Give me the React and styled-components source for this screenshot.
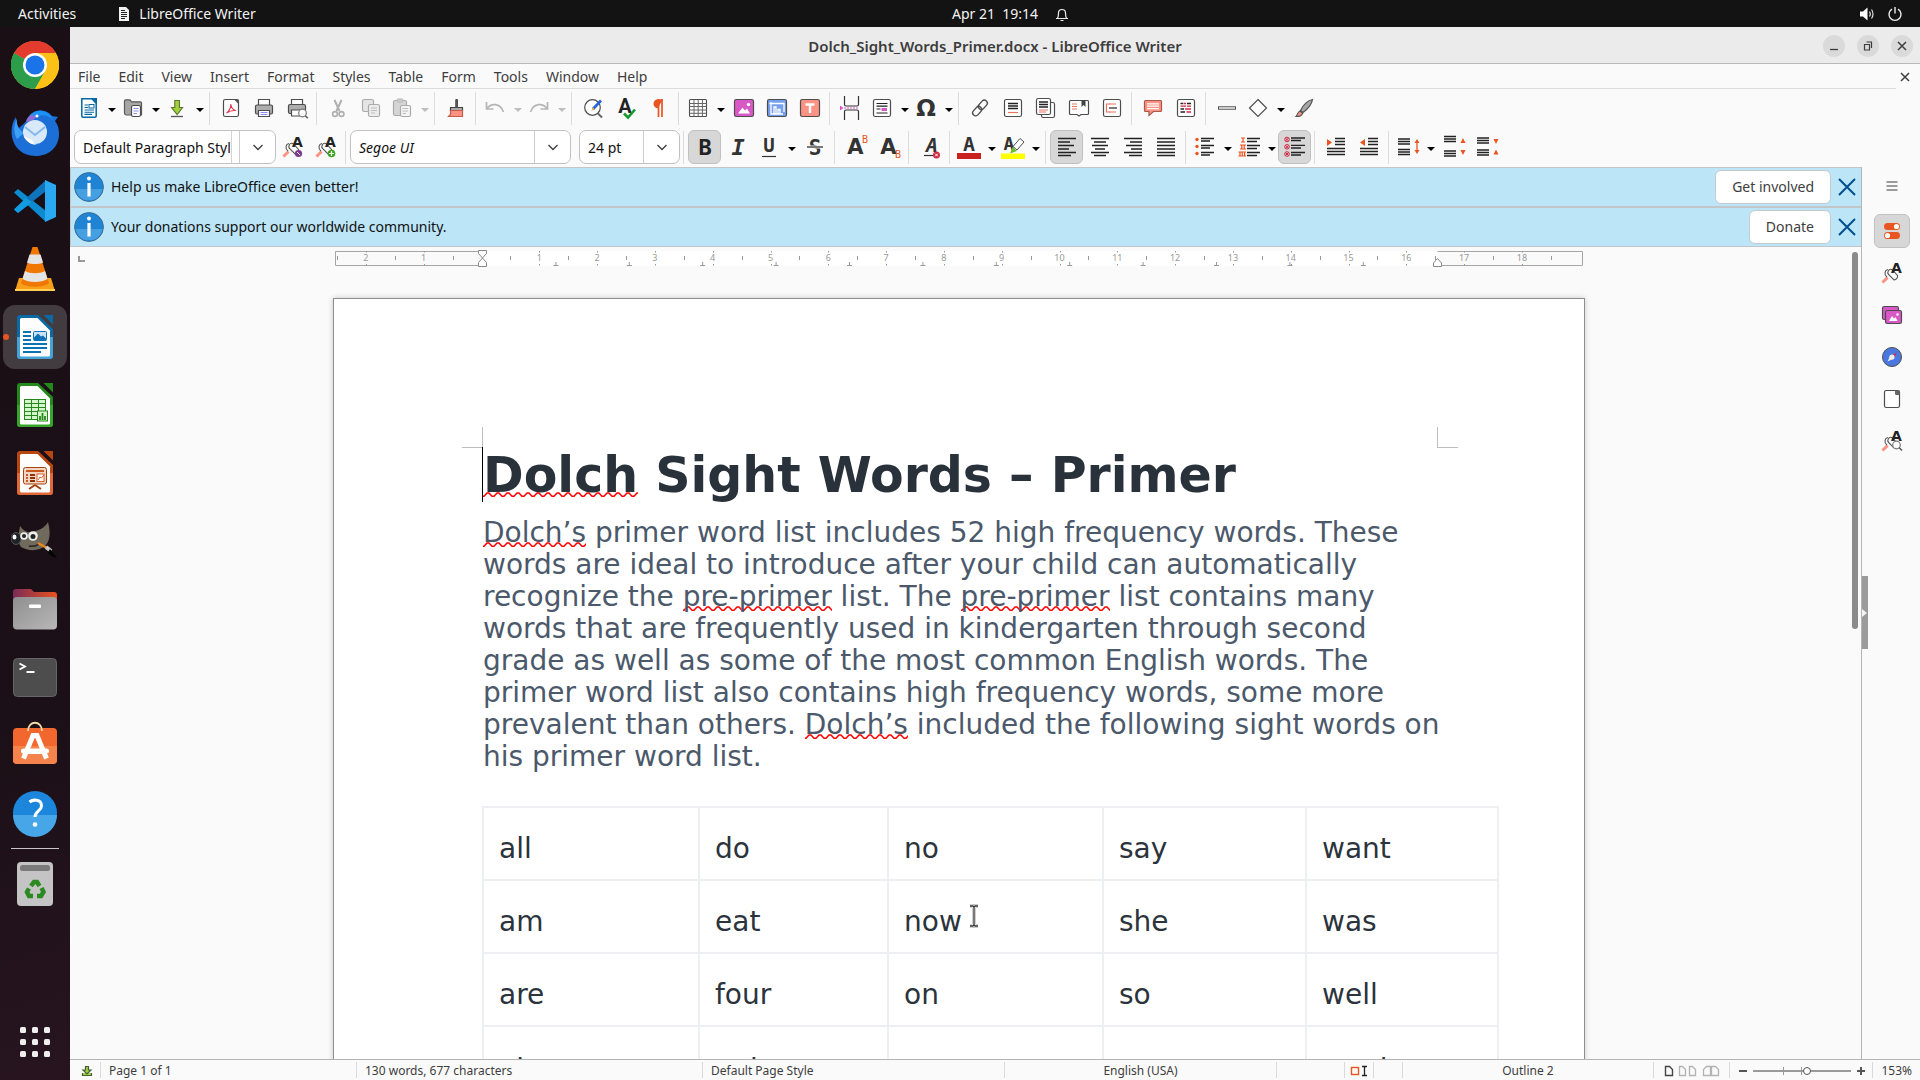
import React from "react";
import styled, { createGlobalStyle, css } from "styled-components";

const ui = `"Noto Sans", "Open Sans", sans-serif`;
const docFont = `"DejaVu Sans", sans-serif`;
const ink = "#3d3d3d";
const line = "#4d4d4d";
const orange = "#e95420";

const GlobalStyle = createGlobalStyle`
  *, *::before, *::after { box-sizing: border-box; }
  html, body { margin: 0; height: 100%; }
  body { font-family: ${ui}; font-size: 14px; line-height: 20px; color: ${ink}; background: #fafafa; overflow: hidden; }
  button { font: inherit; color: inherit; padding: 0; margin: 0; border: 0; background: none; cursor: default; }
  svg { display: block; flex: none; }
`;

/* ---------- shell ---------- */
const Desktop = styled.div`
  height: 100vh;
  display: flex;
  flex-direction: column;
`;
const TopBar = styled.header`
  flex: none;
  height: 27px;
  background: #131313;
  color: #f2f2f2;
  display: grid;
  grid-template-columns: 1fr auto 1fr;
  align-items: center;
`;
const TopGroup = styled.div`
  display: flex;
  align-items: center;
  gap: ${(p) => p.$gap || 8}px;
  justify-content: ${(p) => (p.$end ? "flex-end" : "flex-start")};
  padding: 0 ${(p) => (p.$end ? 17 : 18)}px;
`;
const TopButton = styled.button`
  display: flex;
  align-items: center;
  gap: 8px;
`;
const ClockGroup = styled(TopGroup)`
  padding: 0 0 0 102px;
`;
const Body = styled.div`
  flex: 1;
  min-height: 0;
  display: flex;
`;
const Dock = styled.nav`
  flex: none;
  width: 70px;
  padding: 4px 0;
  background: linear-gradient(165deg, #1a0f15 0%, #1b1017 65%, #27141f 100%);
  display: flex;
  flex-direction: column;
`;
const DockButton = styled.button`
  position: relative;
  height: 68px;
  display: flex;
  align-items: center;
  justify-content: center;
`;
const DockTile = styled.span`
  width: 64px;
  height: 64px;
  border-radius: 12px;
  display: flex;
  align-items: center;
  justify-content: center;
  background: ${(p) => (p.$active ? "#423b40" : "transparent")};
`;
const RunningDot = styled.span`
  position: absolute;
  left: 3px;
  top: 31px;
  width: 6px;
  height: 6px;
  border-radius: 50%;
  background: ${orange};
`;
const DockRule = styled.hr`
  width: 48px;
  height: 1px;
  margin: 1px auto;
  border: 0;
  background: #c9c6c8;
`;
const Spacer = styled.div`
  flex: 1;
`;
const Window = styled.main`
  flex: 1;
  min-width: 0;
  display: flex;
  flex-direction: column;
  background: #fafafa;
`;

/* ---------- title, menus ---------- */
const TitleBar = styled.div`
  flex: none;
  height: 37px;
  padding-top: 1px;
  background: #ebebeb;
  border-bottom: 1px solid #b9b9b9;
  display: grid;
  grid-template-columns: 1fr auto 1fr;
  align-items: center;
`;
const Title = styled.h1`
  grid-column: 2;
  margin: 0;
  font-size: 15px;
  line-height: 20px;
  font-weight: 600;
`;
const WindowButtons = styled.div`
  display: flex;
  justify-content: flex-end;
  gap: 12px;
  padding-right: 7px;
`;
const RoundButton = styled.button`
  width: 22px;
  height: 22px;
  border-radius: 50%;
  background: #dadada;
  display: flex;
  align-items: center;
  justify-content: center;
`;
const MenuBar = styled.div`
  flex: none;
  height: 25px;
  display: flex;
`;
const Menus = styled.nav`
  flex: 1;
  display: flex;
  align-items: center;
  gap: 18px;
  padding: 2px 0 0 8px;
  border-bottom: 1px solid #dcdcdc;
`;
const CloseDoc = styled.button`
  width: 24px;
  padding-left: 2px;
`;

/* ---------- toolbars ---------- */
const Toolbar = styled.div`
  flex: none;
  display: flex;
  align-items: center;
  height: ${(p) => p.$height}px;
  padding-left: 4px;
`;
const ToolButton = styled.button`
  flex: none;
  width: 33px;
  height: 34px;
  display: flex;
  align-items: center;
  justify-content: center;
  ${(p) =>
    p.$on &&
    css`
      background: #d7d7d7;
      border: 1px solid #c1c1c1;
      border-radius: 6px;
    `}
  ${(p) => p.disabled && css`opacity: 0.45;`}
`;
const SplitTool = styled.div`
  flex: none;
  width: 44px;
  height: 34px;
  display: flex;
  align-items: center;
  ${(p) => p.$off && css`opacity: 0.45;`}
`;
const SplitMain = styled.button`
  width: 30px;
  display: flex;
  justify-content: center;
`;
const SplitArrow = styled.button`
  width: 14px;
  height: 24px;
  display: flex;
  align-items: center;
  justify-content: flex-end;
  &::before {
    content: "";
    border: solid transparent;
    border-width: 4px 4px 0;
    border-top-color: ${(p) => (p.$off ? "#777" : "#000")};
    margin-right: 2px;
    margin-top: 3px;
  }
`;
const ToolSeparator = styled.span`
  flex: none;
  width: 1px;
  height: 33px;
  margin: 0 4px 0 3px;
  background: #dcdcdc;
`;
const Combo = styled.div`
  flex: none;
  width: ${(p) => p.$width}px;
  height: 34px;
  margin-right: ${(p) => p.$after || 0}px;
  display: flex;
  border: 1px solid #c1c1c1;
  border-radius: 7px;
  background: #fff;
  overflow: hidden;
`;
const ComboInput = styled.input`
  flex: 1;
  min-width: 0;
  border: 0;
  border-right: ${(p) => (p.$clip ? "1px solid #d5d5d5" : "0")};
  margin-right: ${(p) => (p.$clip ? 7 : 0)}px;
  outline: 0;
  padding: 0 0 0 8px;
  background: transparent;
  font-family: ${ui};
  font-size: 14px;
  font-style: ${(p) => (p.$italic ? "italic" : "normal")};
  color: #111;
`;
const ComboArrow = styled.button`
  width: 36px;
  border-left: 1px solid #cdcdcd;
  display: flex;
  align-items: center;
  justify-content: center;
`;

/* ---------- workspace ---------- */
const Work = styled.div`
  flex: 1;
  min-height: 0;
  display: flex;
`;
const Editor = styled.section`
  flex: 1;
  min-width: 0;
  display: flex;
  flex-direction: column;
`;
const InfoBar = styled.div`
  flex: none;
  height: 40px;
  display: flex;
  align-items: center;
  gap: 7px;
  padding: 0 5px 0 3px;
  background: #bce5f7;
  border: 1px solid #c3c6c8;
  border-right: 0;
  color: #111;
`;
const InfoText = styled.p`
  margin: 0;
  flex: 1;
`;
const InfoAction = styled.button`
  height: 34px;
  padding: 0 16px;
  background: #fff;
  border: 1px solid #c6cacc;
  border-radius: 6px;
  color: ${ink};
`;
const Scroller = styled.div`
  flex: 1;
  min-height: 0;
  display: flex;
`;
const Canvas = styled.div`
  flex: 1;
  min-width: 0;
  display: flex;
  flex-direction: column;
  overflow: hidden;
`;
const RulerRow = styled.div`
  flex: none;
  height: 24px;
  padding-top: 3px;
  display: grid;
  grid-template-columns: 1fr auto 1fr;
`;
const TabMark = styled.span`
  width: 7px;
  height: 6px;
  margin: 6px 0 0 8px;
  border: solid #999;
  border-width: 0 0 2px 2px;
`;
const PageArea = styled.div`
  flex: 1;
  min-height: 0;
  overflow: hidden;
  padding-top: 27px;
  display: flex;
  justify-content: center;
  align-items: flex-start;
`;
const Page = styled.article`
  position: relative;
  flex: none;
  width: 1252px;
  padding: 148px 147px 148px 149px;
  background: #fff;
  border: 1px solid #8e8e8e;
  box-shadow: 0 0 6px rgba(0, 0, 0, 0.2);
  font-family: ${docFont};
`;
const Corner = styled.span`
  position: absolute;
  top: 128px;
  width: 21px;
  height: 21px;
  border-bottom: 1px solid #bdbdbd;
  ${(p) =>
    p.$right
      ? css`right: 126px; border-left: 1px solid #bdbdbd;`
      : css`left: 128px; border-right: 1px solid #bdbdbd;`}
`;
const Caret = styled.span`
  position: absolute;
  left: 148px;
  top: 148px;
  width: 1px;
  height: 55px;
  background: #000;
`;
const Pointer = styled.svg`
  position: absolute;
  left: 634px;
  top: 604px;
`;
const Heading = styled.h2`
  margin: 0;
  font-size: 49px;
  line-height: 57px;
  font-weight: 700;
  color: #29313a;
  white-space: nowrap;
`;
const Paragraph = styled.p`
  margin: 13px 0 33px;
  font-size: 28px;
  line-height: 32px;
  color: #4b596b;
  white-space: nowrap;
`;
const squiggle = encodeURIComponent(
  `<svg xmlns='http://www.w3.org/2000/svg' width='10' height='5' viewBox='0 0 10 5'><path d='M-1 4.2H1L4 .9H6L9 4.2H11' fill='none' stroke='#f00' stroke-width='1.5' stroke-linejoin='round'/></svg>`
);
const Misspelt = styled.span`
  padding-bottom: ${(p) => (p.$big ? 0 : 1)}px;
  background: url("data:image/svg+xml,${squiggle}") repeat-x left bottom ${(p) => (p.$big ? 7 : 3)}px;
`;
const WordTable = styled.table`
  border-collapse: collapse;
  table-layout: fixed;
  width: 1015px;
  margin-left: -1px;
  font-size: 28px;
  line-height: 32px;
  color: #2b333c;
`;
const WordCell = styled.td`
  height: 73px;
  padding: 25px 15px 14px;
  border: 2px solid #eeeff2;
  text-align: left;
`;
const ScrollTrack = styled.div`
  flex: none;
  width: 13px;
  padding: 5px 3px 5px 4px;
`;
const ScrollThumb = styled.div`
  height: 47%;
  border-radius: 3px;
  background: #8b8b8b;
`;
const SideBar = styled.aside`
  position: relative;
  flex: none;
  width: 59px;
  border-left: 1px solid #b4b4b4;
  padding-top: 2px;
  display: flex;
  flex-direction: column;
  align-items: center;
  gap: 8px;
`;
const SideButton = styled.button`
  width: 36px;
  height: 34px;
  margin-left: 1px;
  border-radius: 6px;
  display: flex;
  align-items: center;
  justify-content: center;
  ${(p) => p.$first && css`margin-bottom: 3px;`}
  ${(p) => p.$on && css`background: #d7d7d7; border: 1px solid #c1c1c1;`}
`;
const SideHandle = styled.button`
  position: absolute;
  left: 0;
  top: 409px;
  width: 6px;
  height: 73px;
  background: #9b9b9b;
  display: flex;
  align-items: center;
  &::before {
    content: "";
    border: solid transparent;
    border-width: 4px 0 4px 5px;
    border-left-color: #f4f4f4;
  }
`;

/* ---------- status bar ---------- */
const StatusBar = styled.footer`
  flex: none;
  height: 21px;
  border-top: 1px solid #b4b4b4;
  display: grid;
  grid-template-columns: 30px 256fr 346fr 302fr 272fr 68px 29px 29px 251fr 76px 143px 48px;
  font-size: 12px;
  line-height: 18px;
`;
const StatusCell = styled.div`
  position: relative;
  display: flex;
  align-items: center;
  gap: ${(p) => p.$gap || 0}px;
  justify-content: ${(p) => (p.$center ? "center" : p.$end ? "flex-end" : "flex-start")};
  padding: 1px ${(p) => (p.$center ? 0 : 8)}px 0;
  white-space: nowrap;
  border-left: ${(p) => (p.$first ? "4px solid transparent" : "1px solid transparent")};
  border-image: ${(p) =>
    p.$first ? "none" : "linear-gradient(transparent 3px, #dadada 3px, #dadada 17px, transparent 17px) 1"};
`;
const ZoomSlider = styled.input`
  appearance: none;
  width: 98px;
  height: 14px;
  margin: 0;
  background:
    linear-gradient(#9a9a9a, #9a9a9a) 0 center / 98px 2px no-repeat,
    linear-gradient(#9a9a9a, #9a9a9a) 30px center / 1px 8px no-repeat,
    linear-gradient(#9a9a9a, #9a9a9a) 48px center / 1px 8px no-repeat;
  &::-webkit-slider-thumb {
    appearance: none;
    width: 8px;
    height: 8px;
    border-radius: 50%;
    border: 1px solid #555;
    background: #fff;
  }
`;
const ZoomStep = styled.button`
  width: 10px;
  height: 14px;
  display: flex;
  align-items: center;
  justify-content: center;
`;

/* ---------- icons ---------- */
const Icon = ({ size = 24, children, ...rest }) => (
  <svg width={size} height={size} viewBox={`0 0 ${size} ${size}`} fill="none" aria-hidden="true" {...rest}>
    {children}
  </svg>
);
const Glyph = ({ x = 12, y = 19, size = 20, fill = "#333", family = "DejaVu Sans Mono", weight = 700, style, children }) => (
  <text x={x} y={y} fontSize={size} fill={fill} fontFamily={family} fontWeight={weight} fontStyle={style} textAnchor="middle">
    {children}
  </text>
);
const Lines = ({ rows, color = "#222", w = 1.5 }) => (
  <path d={rows.map(([x1, x2, y]) => `M${x1} ${y}H${x2}`).join("")} stroke={color} strokeWidth={w} />
);
const Paper = ({ x = 4.5, y = 3.5, w = 15, h = 17, fill = "#fff" }) => (
  <rect x={x} y={y} width={w} height={h} rx="1.8" fill={fill} stroke={line} strokeWidth="1.2" />
);
const Brush = () => (
  <>
    <path d="M3.500 20.500L6.500 17.500" stroke="#fc9283" strokeWidth="3" strokeLinecap="square" />
    <path d="M7 16c-3.500-3-2-7 1-7.500M8.500 9.500c1-1.500 3-1.500 4-.5l5 5.500c.5 2-1 4-3.500 4.500l-5.500-5.500c-.8-1.200-.8-2.800 0-4Z" fill="#fafafa" stroke="#555" strokeWidth="1.100" />
  </>
);

const icons = {
  newdoc: (
    <Icon>
      <path d="M4.800 2.800H15L19.200 7V20a1.200 1.200 0 0 1-1.200 1.200H6A1.200 1.200 0 0 1 4.800 20Z" fill="#fff" stroke="#0369a3" strokeWidth="1.500" />
      <path d="M13.500 2H20V9Z" fill="#0369a3" />
      <Lines color="#0369a3" rows={[[7.500, 11, 9], [7.500, 11, 11.500], [7.500, 17, 14], [7.500, 17, 16.200], [7.500, 15, 18.400]]} w={1.100} />
      <rect x="12" y="8.500" width="5" height="3.500" stroke="#0369a3" />
    </Icon>
  ),
  open: (
    <Icon>
      <path d="M3.500 5a1.200 1.200 0 0 1 1.200-1.200H9l1.500 2h8.800A1.200 1.200 0 0 1 20.500 7v12H5.500a2 2 0 0 1-2-2Z" fill="#a6a6a6" stroke="#5a5a5a" strokeWidth="1.200" />
      <Paper x={10.500} y={9.500} w={9} h={11} />
      <Lines color="#8d8cf0" rows={[[12.500, 17.500, 12.500], [12.500, 17.500, 15], [12.500, 16, 17.500]]} w={1.200} />
    </Icon>
  ),
  save: (
    <Icon>
      <path d="M9.800 4.500h4.600v7h3.200L12.100 18.500 6.600 11.500h3.200Z" fill="#a3d040" stroke="#59762a" strokeWidth="1.100" />
      <path d="M6 20.500h12" stroke="#555" strokeWidth="1.300" />
    </Icon>
  ),
  pdf: (
    <Icon>
      <Paper /><path d="M15 3.500h4.500V8Z" fill="#555" />
      <path d="M7.500 17c2-1 4.500-5 4.300-9 .5 4 2.500 6 5 6.500-3-.3-6 .3-9.300 2.500Z" stroke="#e2354f" strokeWidth="1.100" />
    </Icon>
  ),
  print: (
    <Icon>
      <path d="M6.500 9V3.500h11V9" fill="#fff" stroke={line} strokeWidth="1.200" />
      <rect x="3.500" y="9" width="17" height="9" rx="1.500" fill="#adadad" stroke={line} strokeWidth="1.200" />
      <path d="M6.500 14.500h11v6h-11Z" fill="#fff" stroke={line} strokeWidth="1.200" />
      <Lines color="#8d8cf0" rows={[[8.500, 15.500, 16.500], [8.500, 15.500, 18.500]]} w={1.100} />
    </Icon>
  ),
  preview: (
    <Icon>
      <path d="M6.500 8.500V3.500h11v5" fill="#fff" stroke={line} strokeWidth="1.200" />
      <rect x="3.500" y="8.500" width="17" height="9" rx="1.500" fill="#adadad" stroke={line} strokeWidth="1.200" />
      <path d="M6.500 14h9v6h-9Z" fill="#fff" stroke={line} strokeWidth="1.200" />
      <circle cx="17.500" cy="17" r="3.800" fill="#fff" stroke="#777" strokeWidth="1.200" />
      <path d="M20.300 19.800l2.500 2.500" stroke="#555" strokeWidth="1.500" />
    </Icon>
  ),
  cut: (
    <Icon>
      <path d="M8.500 4l5 11M15.500 4l-5 11" stroke="#555" strokeWidth="2" />
      <circle cx="9" cy="18" r="2.400" stroke="#555" strokeWidth="1.600" /><circle cx="15.500" cy="18" r="2.400" stroke="#555" strokeWidth="1.600" />
    </Icon>
  ),
  copy: (
    <Icon>
      <Paper x={3.500} y={3.500} w={11} h={12} fill="#ccc" /><Paper x={9.500} y={8.500} w={11} h={12} fill="#ddd" />
      <Lines color="#777" rows={[[12, 18, 12], [12, 18, 14.500], [12, 16, 17]]} w={1.200} />
    </Icon>
  ),
  paste: (
    <Icon>
      <Paper x={3.500} y={4.500} w={13} h={15} fill="#aaa" /><rect x="7" y="3" width="6" height="3" rx="1" fill="#999" stroke="#666" />
      <Paper x={10.500} y={9.500} w={10} h={11} fill="#eee" />
      <Lines color="#777" rows={[[12.500, 18, 12.500], [12.500, 18, 15], [12.500, 16, 17.500]]} w={1.200} />
    </Icon>
  ),
  clone: (
    <Icon>
      <path d="M11.800 3.500h1.600v8h-1.600Z" fill="#666" stroke="#444" /><path d="M6.500 11.500h12v3h-12Z" fill="#aaa" stroke="#444" strokeWidth="1.200" />
      <path d="M6.500 14.500h12v6h-14l2-2Z" fill="#fc9283" stroke="#c45a48" strokeWidth="1.200" />
    </Icon>
  ),
  undo: (<Icon><path d="M3.500 6v7h7M4 12.500c4-5.500 13-6 16.500 3.500" stroke="#666" strokeWidth="1.700" /></Icon>),
  redo: (<Icon><path d="M20.500 6v7h-7M20 12.500c-4-5.500-13-6-16.500 3.500" stroke="#666" strokeWidth="1.700" /></Icon>),
  find: (
    <Icon>
      <circle cx="11.500" cy="11.500" r="7.800" fill="#fff" stroke={line} strokeWidth="1.200" />
      <path d="M17 17.500l4 4" stroke="#666" strokeWidth="2" />
      <path d="M20 4.500l-8 8.500" stroke="#2b63d9" strokeWidth="2.800" /><path d="M12.500 11.500l-2.500 3.500 3.500-1.700Z" fill="#f5a623" />
    </Icon>
  ),
  spell: (
    <Icon>
      <Glyph x={11} y={17} size={20} family="Roboto" fill="#222">A</Glyph>
      <path d="M10 17.500l4 4 7-8" stroke="#189a2e" strokeWidth="2.600" />
    </Icon>
  ),
  pilcrow: (
    <Icon>
      <path d="M11.500 3v18M15 3v18" stroke={orange} strokeWidth="1.700" /><path d="M15.500 3.200H11a4.500 4.500 0 0 0 0 9Z" fill={orange} />
    </Icon>
  ),
  table: (
    <Icon>
      <rect x="3.500" y="3.500" width="17" height="17" rx="1" fill="#fff" stroke={line} strokeWidth="1.100" />
      <path d="M3.500 7.500h17M3.500 10.500h17M3.500 14h17M3.500 17.300h17M8 3.500v17M12.200 3.500v17M16.400 3.500v17" stroke="#666" strokeWidth="1" />
    </Icon>
  ),
  image: (
    <Icon>
      <Paper x={2.500} y={3.500} w={19} h={17} fill="#d858c8" />
      <path d="M6 17.500l4.500-6 2.500 3 2-2 3 5Z" fill="#fff" /><circle cx="16.500" cy="8.500" r="1.700" fill="#fff" />
    </Icon>
  ),
  chart: (
    <Icon>
      <Paper x={2.500} y={3.500} w={19} h={17} fill="#779ff0" />
      <path d="M6 6v12h12M4.500 7.500H19V16M9 17.500V11h2v6.500M13 17.500v-4h2v4" stroke="#fff" strokeWidth="1.300" />
    </Icon>
  ),
  textbox: (
    <Icon>
      <Paper x={2.500} y={3.500} w={19} h={17} fill="#fc9283" /><path d="M7.500 8.500h9M12 8.500V17" stroke="#fff" strokeWidth="2.400" />
    </Icon>
  ),
  pagebreak: (
    <Icon>
      <path d="M5.500 0v8.500a1.500 1.500 0 0 0 1.500 1.500h11a1.500 1.500 0 0 0 1.500-1.500V0M5.500 24v-8.500a1.500 1.500 0 0 1 1.500-1.500h11a1.500 1.500 0 0 1 1.500 1.500V24" stroke="#333" strokeWidth="1.200" />
      <path d="M5 12h15" stroke="#d858c8" strokeDasharray="2 1" /><path d="M1 9.500v5l3.500-2.500Z" fill="#d858c8" />
    </Icon>
  ),
  field: (
    <Icon>
      <Paper x={3.500} w={17} /><Lines rows={[[6.500, 17.500, 7.500], [6.500, 17.500, 10.200], [6.500, 10.500, 13], [6.500, 17.500, 17]]} w={1.200} />
      <rect x="11.500" y="12" width="5.500" height="3" fill="#d858c8" />
    </Icon>
  ),
  omega: (<Icon><Glyph y={20} size={23} family="DejaVu Sans">Ω</Glyph></Icon>),
  link: (
    <Icon>
      <g stroke={line} strokeWidth="1.300" transform="rotate(-48 12 12)">
        <rect x="2.500" y="9" width="10.500" height="6" rx="3" /><rect x="11" y="9" width="10.500" height="6" rx="3" />
      </g>
    </Icon>
  ),
  footnote: (<Icon><Paper x={3.500} w={17} /><Lines rows={[[7, 17, 7.500], [7, 17, 10], [7, 17, 12.500]]} /><Lines color="#e8735f" rows={[[7, 17, 16.500]]} w={1.200} /></Icon>),
  endnote: (
    <Icon>
      <Paper x={7.500} y={6.500} w={13} h={15} /><Paper x={2.500} y={2.500} w={14} h={16} />
      <Lines rows={[[5, 14, 6], [5, 14, 8.500], [5, 14, 11]]} w={1.300} /><Lines color="#e8735f" rows={[[5, 14, 14], [5, 12, 16]]} w={1.100} />
    </Icon>
  ),
  bookmark: (
    <Icon>
      <path d="M2.500 5.500a1 1 0 0 1 1-1h17a1 1 0 0 1 1 1v12a1 1 0 0 1-1 1H14l-2 1.500-2-1.500H3.500a1 1 0 0 1-1-1Z" fill="#fff" stroke={line} strokeWidth="1.200" />
      <path d="M14.500 4h4v7l-2-2-2 2Z" fill="#444" /><Lines color="#e8735f" rows={[[5, 10, 8], [5, 10, 10.500], [5, 10, 13]]} w={1.200} />
    </Icon>
  ),
  crossref: (<Icon><Paper x={3.500} w={17} /><path d="M10 8H6.500v8H10" stroke="#e8735f" strokeWidth="1.200" /><Lines color="#e8735f" rows={[[9, 16, 8], [9, 16, 16]]} w={1.200} /><Lines rows={[[9, 17, 12]]} w={1.200} /></Icon>),
  comment: (
    <Icon>
      <path d="M3.500 5.500a1 1 0 0 1 1-1h15a1 1 0 0 1 1 1v9a1 1 0 0 1-1 1H12.500L8 19.500V15.500H4.500a1 1 0 0 1-1-1Z" fill="#fc9283" stroke="#a8584c" strokeWidth="1.200" />
      <Lines color="#fff" rows={[[6, 18, 7.800], [6, 18, 10.200], [6, 18, 12.600]]} w={1.200} />
    </Icon>
  ),
  track: (<Icon><Paper x={3.500} w={17} /><Lines rows={[[6.500, 9, 7.500], [13, 17, 7.500], [6.500, 10, 13], [6.500, 11, 16]]} w={1.300} /><Lines color="#d02b45" rows={[[9.500, 12, 7.500], [6.500, 12, 10.200], [13, 17, 10.200], [11, 17, 13], [12.500, 17, 16]]} w={1.300} /></Icon>),
  hline: (<Icon><rect x="3.500" y="10.800" width="17" height="2.400" fill="#fff" stroke={line} /></Icon>),
  diamond: (<Icon><path d="M12 3.500l8.500 8.500-8.500 8.500L3.500 12Z" fill="#fff" stroke={line} strokeWidth="1.200" /></Icon>),
  paint: (
    <Icon>
      <path d="M8.500 14.500C11 9 16 4 20.500 3.500 20 8 15.500 13.500 11 16.500Z" fill="#a6a6a6" stroke="#555" strokeWidth="1.200" />
      <path d="M8 15l2.700 2.200c-1 2.800-3.500 3.500-6.700 3.300 1.500-1.200 1.500-4.500 4-5.500Z" fill="#fc9283" stroke="#555" strokeWidth="1.100" />
    </Icon>
  ),
  styleUpdate: (<Icon><Brush /><Glyph x={16.500} y={12} size={14} family="DejaVu Sans" fill="#222">A</Glyph><circle cx="17.500" cy="18.500" r="3.600" fill="#7b3a8f" /><path d="M16 17l3 3" stroke="#fff" /></Icon>),
  styleNew: (<Icon><Brush /><Glyph x={16.500} y={12} size={14} family="DejaVu Sans" fill="#222">A</Glyph><circle cx="17.500" cy="18.500" r="3.800" fill="#3aa51c" /><path d="M17.500 16v5M15 18.500h5" stroke="#fff" strokeWidth="1.200" /></Icon>),
  styles: (<Icon><Brush /><Glyph x={16.500} y={12} size={14} family="DejaVu Sans" fill="#222">A</Glyph></Icon>),
  inspect: (<Icon><Brush /><Glyph x={16.500} y={12} size={14} family="DejaVu Sans" fill="#222">A</Glyph><circle cx="16.500" cy="16" r="3.800" fill="#fafafa" stroke="#777" strokeWidth="1.200" /><path d="M19 18.500l3 3" stroke="#555" strokeWidth="1.400" /></Icon>),
  bold: (<Icon><Glyph y={20} size={22} family="DejaVu Sans Mono" fill="#222">B</Glyph></Icon>),
  italic: (<Icon><Glyph y={20} size={22} style="italic">I</Glyph></Icon>),
  underline: (<Icon><Glyph y={17} size={19}>U</Glyph><path d="M5 21.500h14" stroke="#333" strokeWidth="1.200" /></Icon>),
  strike: (<Icon><Glyph y={20} size={21}>S</Glyph><path d="M4 12h16" stroke="#fafafa" strokeWidth="3" /><path d="M4 12h16" stroke="#333" strokeWidth="1.300" /></Icon>),
  sup: (<Icon><Glyph x={11.500} y={19} size={21} family="DejaVu Sans">A</Glyph><Glyph x={21} y={8} size={10} fill={orange} weight={400}>B</Glyph></Icon>),
  sub: (<Icon><Glyph x={11.500} y={19} size={21} family="DejaVu Sans">A</Glyph><Glyph x={21} y={23} size={10} fill={orange} weight={400}>B</Glyph></Icon>),
  clear: (<Icon><Glyph x={14} y={17} size={20} style="italic">A</Glyph><path d="M6 20.500h11" stroke="#333" strokeWidth="1.200" /><circle cx="18.500" cy="20" r="3.500" fill="#d02b45" /><path d="M17.200 18.700l2.600 2.600m0-2.600l-2.600 2.600" stroke="#fff" /></Icon>),
  fontColor: (<Icon><Glyph x={12} y={16} size={20}>A</Glyph><rect x="0" y="18" width="24" height="6" fill="#c9211e" /></Icon>),
  highlight: (
    <Icon>
      <Glyph x={8} y={15} size={18}>A</Glyph>
      <path d="M12 11.500l7-8 4 3.500-7 8Z" fill="#fff" stroke={line} /><path d="M11.500 12l4.500 4-7 2.500Z" fill="#6bbf2a" /><rect x="0" y="18.500" width="24" height="5.500" fill="#ffff00" />
    </Icon>
  ),
  left: (<Icon><Lines rows={[[3, 21, 3.500], [3, 15, 7], [3, 19, 10.500], [3, 14, 14], [3, 21, 17.500], [3, 16, 20.500]]} w={1.300} /></Icon>),
  center: (<Icon><Lines rows={[[3, 21, 3.500], [6, 18, 7], [4, 20, 10.500], [7, 17, 14], [3, 21, 17.500], [6, 18, 20.500]]} w={1.300} /></Icon>),
  right: (<Icon><Lines rows={[[3, 21, 3.500], [9, 21, 7], [5, 21, 10.500], [10, 21, 14], [3, 21, 17.500], [8, 21, 20.500]]} w={1.300} /></Icon>),
  justify: (<Icon><Lines rows={[[3, 21, 3.500], [3, 21, 7], [3, 21, 10.500], [3, 21, 14], [3, 21, 17.500], [3, 21, 20.500]]} w={1.300} /></Icon>),
  bullets: (
    <Icon>
      {[4.500, 11.500, 18.500].map((y) => (<circle key={y} cx="4" cy={y} r="1.700" fill={orange} />))}
      <Lines rows={[[8, 21, 3.500], [8, 17, 6], [8, 21, 10.500], [8, 17, 13], [8, 21, 17.500], [8, 17, 20]]} w={1.300} />
    </Icon>
  ),
  numbers: (
    <Icon>
      <path d="M4 3h4M6 3v4M4 7h4M3 10h6M4.800 10v4M7.200 10v4M3 14h6M1.500 17h7.500M3 17v4M5.300 17v4M7.600 17v4M1.500 21h7.500" stroke={orange} strokeWidth="1.200" />
      <Lines rows={[[10, 23, 3.500], [10, 20, 6.500], [10, 23, 10.500], [10, 20, 13.500], [10, 23, 17.500], [10, 20, 20.500]]} w={1.300} />
    </Icon>
  ),
  noList: (
    <Icon>
      {[4.500, 11.800, 19].map((y) => (<g key={y} stroke="#d02b45"><circle cx="4" cy={y} r="2.300" /><path d={`M2.500 ${y - 1.500}l3 3m0-3l-3 3`} /></g>))}
      <Lines rows={[[8, 22, 3], [8, 18, 5.500], [8, 22, 10.300], [8, 18, 13], [8, 22, 17.500], [8, 18, 20]]} w={1.300} />
    </Icon>
  ),
  indent: (<Icon><path d="M3 4v7l5-3.500Z" fill={orange} /><Lines rows={[[11, 21, 3.500], [11, 21, 6.500], [11, 21, 9.500], [3, 21, 13.500], [3, 21, 16.500], [3, 21, 19.500]]} w={1.400} /></Icon>),
  outdent: (<Icon><path d="M8 4v7L3 7.500Z" fill={orange} /><Lines rows={[[11, 21, 3.500], [11, 21, 6.500], [11, 21, 9.500], [3, 21, 13.500], [3, 21, 16.500], [3, 21, 19.500]]} w={1.400} /></Icon>),
  spacing: (<Icon><Lines rows={[[2, 14, 4], [2, 14, 6.500], [2, 14, 9], [2, 14, 14.500], [2, 14, 17], [2, 14, 19.500]]} w={1.300} /><path d="M21 6v11" stroke={orange} strokeWidth="1.300" /><path d="M18.500 8L21 4l2.500 4ZM18.500 15l2.500 4 2.500-4Z" fill={orange} /></Icon>),
  spaceUp: (<Icon><Lines rows={[[2, 14, 1.500], [2, 14, 4], [2, 14, 6.500], [2, 14, 16], [2, 14, 18.500], [2, 14, 21]]} w={1.300} /><path d="M18.500 8L21 3l2.500 5ZM18.500 15l2.500 5 2.500-5Z" fill={orange} /></Icon>),
  spaceDown: (<Icon><Lines rows={[[2, 14, 3], [2, 14, 5.500], [2, 14, 8], [2, 14, 15], [2, 14, 17.500], [2, 14, 20]]} w={1.300} /><path d="M18.500 4l2.500 5 2.500-5ZM18.500 19.500l2.500-5 2.500 5Z" fill={orange} /></Icon>),
  burger: (<Icon size={16}><Lines color={ink} rows={[[2.500, 13.500, 4], [2.500, 13.500, 8], [2.500, 13.500, 12]]} w={1.200} /></Icon>),
  properties: (
    <Icon>
      <rect x="4" y="4" width="16" height="7" rx="3.500" fill={orange} /><circle cx="16.500" cy="7.500" r="2.600" fill="#fff" />
      <rect x="4" y="13" width="16" height="7" rx="3.500" fill={orange} /><circle cx="7.500" cy="16.500" r="2.600" fill="#fff" />
    </Icon>
  ),
  gallery: (
    <Icon>
      <Paper x={2.500} y={3.500} w={16} h={13} fill="#d858c8" /><Paper x={5.500} y={7.500} w={16} h={13} fill="#d858c8" />
      <path d="M9 18l3-5 2 2.500 1.500-1.500 2 4Z" fill="#fff" /><circle cx="17.500" cy="11.500" r="1.200" fill="#fff" />
    </Icon>
  ),
  navigator: (
    <Icon>
      <circle cx="12" cy="12" r="9.500" fill="#4a78e0" stroke={line} /><path d="M17 7.500l-3 5.500-2.500-2.500Z" fill="#d02b45" /><path d="M7.500 16.500l2.500-5.500 3 3Z" fill="#e8e8e8" /><circle cx="12" cy="12" r="2.600" fill="#ececec" />
    </Icon>
  ),
  page: (<Icon><Paper /><path d="M15 3.500h4.500V8h-3a1.500 1.500 0 0 1-1.500-1.500Z" fill="#666" /></Icon>),
};

const OfficeFile = ({ dark, light, children }) => (
  <Icon size={48}>
    <path d="M9 2h18l15 14v27a3 3 0 0 1-3 3H9a3 3 0 0 1-3-3V5a3 3 0 0 1 3-3Z" fill={dark} />
    <path d="M6 24h36v19a3 3 0 0 1-3 3H9a3 3 0 0 1-3-3Z" fill={light} />
    <path d="M32.500 2h9.500v9.500Z" fill={dark} /><path d="M10.500 5H26.500L39 17.500v24.500a1.500 1.500 0 0 1-1.500 1.500h-27A1.500 1.500 0 0 1 9 42V6.500A1.500 1.500 0 0 1 10.500 5Z" fill="#fdfdfd" />
    {children}
  </Icon>
);

const dockApps = [
  ["Google Chrome", (
    <Icon size={48}>
      <circle cx="24" cy="24" r="24" fill="#fbc116" /><path d="M24 24L3.200 12A24 24 0 0 1 44.800 12Z" fill="#e33b2e" />
      <path d="M3.200 12A24 24 0 0 0 24 48l10.400-18L24 24Z" fill="#2c9e4b" /><path d="M24 12h20.800A24 24 0 0 1 24 48l10.400-18Z" fill="#fbc116" /><path d="M3.200 12A24 24 0 0 1 44.800 12H24L14 18Z" fill="#e33b2e" />
      <circle cx="24" cy="24" r="12" fill="#fff" /><circle cx="24" cy="24" r="9.500" fill="#1a73e8" />
    </Icon>
  )],
  ["Thunderbird", (
    <Icon size={48}>
      <path d="M5 8C0 14-1 26 3 34c4 9 13 13 22 13 13 0 23-9 23-22 0-7-2-10-4-13l3-4-6-1C37 2 31 0 25 2c-5 2-7 5-9 9-2 3-6 6-8 8-2-3-3-7-3-11Z" fill="#1d6fd8" />
      <path d="M16 11c3-7 8-9 12-9 8-1 13 5 14 9-5-5-11-6-16-3-4 2-6 4-10 3Z" fill="#1a93f4" /><path d="M15 12c2 2 9-1 11-5l-6-1c-2 1-4 3-5 6Z" fill="#8a6fd8" />
      <path d="M6 30C2 24 3 14 6 10c-1 8 3 11 7 14Z" fill="#3aa0f8" /><circle cx="24" cy="23" r="12" fill="#d8e9fc" /><path d="M14 18l10 8 10-8" stroke="#86b8ee" strokeWidth="2" /><path d="M13 27c2 5 7 9 13 9-3-1-4-2-4-4Z" fill="#fff" /><circle cx="26" cy="7" r="1.500" fill="#fff" />
    </Icon>
  )],
  ["Visual Studio Code", (
    <Icon size={48}>
      <path d="M3 15.500L7 12l28 22v11Z" fill="#0d8bd0" /><path d="M3 32.500L7 36 35 14V3Z" fill="#0e75bd" />
      <path d="M34 3l11 5v32l-11 5Z" fill="#2aa9f2" /><path d="M3 32.500L7 36 21 25 15 21Z" fill="#119be0" />
    </Icon>
  )],
  ["VLC media player", (
    <Icon size={48}>
      <path d="M8 33h32l4 13H4Z" fill="#f9a01b" /><path d="M10 38L21.500 2h5L38 38c-4 5-24 5-28 0Z" fill="#f07800" />
      <path d="M18.500 9.500h11l2.500 8c-4 2-12 2-16 0Z" fill="#e4e4e4" /><path d="M14 26c5 3 15 3 20 0l2.500 8c-6 4-19 4-25 0Z" fill="#e4e4e4" /><path d="M4 44h40v2H4Z" fill="#ffce55" />
    </Icon>
  )],
  ["LibreOffice Writer", (
    <OfficeFile dark="#0b6aa3" light="#45a2d6">
      <Lines color="#0b72b5" w={2} rows={[[12, 20, 19], [12, 20, 23], [12, 20, 27], [12, 36, 31], [12, 36, 35], [12, 30, 39]]} />
      <rect x="22.500" y="18.500" width="13" height="9" rx="1" fill="#c9e4f5" stroke="#0b72b5" /><path d="M23 27.500v-3l4-4 3 3 2-1 3 3v2Z" fill="#0b72b5" />
    </OfficeFile>
  ), true],
  ["LibreOffice Calc", (
    <OfficeFile dark="#24891b" light="#36a629">
      <rect x="13.500" y="18.500" width="21" height="20" fill="#d5f5cc" stroke="#24891b" /><path d="M13.500 22.500h21M13.500 26.500h21M13.500 30.500h21M13.500 34.500h21M20.500 18.500v20M27.500 18.500v20" stroke="#24891b" />
      <rect x="26.500" y="30" width="10" height="10" fill="#d5f5cc" stroke="#24891b" /><path d="M29 39v-4M31.500 39v-7M34 39v-4" stroke="#24891b" strokeWidth="1.800" />
    </OfficeFile>
  )],
  ["LibreOffice Impress", (
    <OfficeFile dark="#b8470f" light="#e0693a">
      <path d="M24 36l-6 4M24 36l6 4" stroke="#a3430f" strokeWidth="2" /><rect x="12.500" y="18.500" width="23" height="16.500" rx="2" fill="#f3d5c6" stroke="#a3430f" />
      <Lines color="#c8571d" w={2} rows={[[15, 33, 22], [15, 17, 26], [15, 17, 29], [15, 17, 32]]} /><Lines color="#8a3508" w={2} rows={[[19, 24, 26], [19, 24, 29], [19, 24, 32]]} />
      <rect x="26" y="25" width="7" height="7.500" fill="#fff" stroke="#d8622a" /><path d="M27 31l2-3 1.500 1L33 26" stroke="#d8622a" />
    </OfficeFile>
  )],
  ["GIMP", (
    <Icon size={48}>
      <g transform="translate(0 4)">
        <path d="M9 5c4 6 10 8 15 5 6-1 11-5 13-9 2 8 3 17-2 23-7 7-18 6-25 2C6 21 8 12 9 5Z" fill="#6f6a5c" />
        <ellipse cx="5" cy="17.500" rx="5" ry="6" fill="#1d2326" stroke="#555" /><ellipse cx="3.500" cy="16" rx="2" ry="2.500" fill="#fff" />
        <circle cx="13" cy="15" r="3.800" fill="#eee" /><circle cx="13" cy="15" r="2" fill="#222" /><circle cx="22" cy="15" r="4.800" fill="#eee" /><circle cx="22" cy="15.500" r="2.500" fill="#222" />
        <path d="M18 25c5 1 8 0 11-3" stroke="#26241e" strokeWidth="1.500" /><path d="M27 22l9 5" stroke="#e8891c" strokeWidth="2.500" /><path d="M35 26l5 4" stroke="#c9c9c9" strokeWidth="4" /><path d="M39 28l7 9c-5-1-8-3-9-6Z" fill="#050505" />
      </g>
    </Icon>
  )],
  ["Files", (
    <Icon size={48}>
      <defs><linearGradient id="folder" x1="0" x2="1"><stop offset="0" stopColor="#7a2b58" /><stop offset="1" stopColor="#e9541f" /></linearGradient>
        <linearGradient id="grey" x1="0" x2="1" y1="0" y2="1"><stop offset="0" stopColor="#8f8f8f" /><stop offset="1" stopColor="#b8b8b8" /></linearGradient></defs>
      <path d="M2 7a3 3 0 0 1 3-3h15l3 3h20a3 3 0 0 1 3 3v12H2Z" fill="url(#folder)" />
      <rect x="2" y="12" width="44" height="32.500" rx="4" fill="url(#grey)" /><rect x="18" y="19.500" width="12" height="3.500" rx="1" fill="#fff" />
    </Icon>
  )],
  ["Terminal", (
    <Icon size={48}>
      <rect x="2.500" y="5.500" width="43" height="38" rx="4" fill="#4d4d4d" stroke="#666" /><path d="M8.500 10.500l5.500 3-5.500 3M15.500 19h8" stroke="#fff" strokeWidth="1.800" />
    </Icon>
  )],
  ["Ubuntu Software", (
    <Icon size={48}>
      <g transform="translate(0 -2)">
        <rect x="2" y="9" width="44" height="36" rx="4" fill="#f2672d" /><path d="M2 27h44v14a4 4 0 0 1-4 4H6a4 4 0 0 1-4-4Z" fill="#f4834c" />
        <path d="M17 12c0-11 14-11 14 0" stroke="#f5d9a8" strokeWidth="1.800" /><path d="M12.500 39.500l9.500-23h4l9.500 23M14 32.500h20" stroke="#fff" strokeWidth="5" /><path d="M12.500 32h23" stroke="#fff" strokeWidth="5" strokeLinecap="round" />
      </g>
    </Icon>
  )],
  ["Help", (
    <Icon size={48}>
      <circle cx="24" cy="24" r="22" fill="#1c86dc" /><path d="M2 26a22 22 0 0 0 44 0Z" fill="#47a6e8" />
      <path d="M18.500 13c3-2.500 12-3.500 12 4 0 5-6.500 5-6.500 11" stroke="#fff" strokeWidth="3" /><circle cx="24" cy="35.500" r="2.300" fill="#fff" />
    </Icon>
  )],
];

const TrashIcon = (
  <Icon size={48}>
    <rect x="6" y="2" width="36" height="44" rx="4" fill="#c4c4c4" /><rect x="9" y="5" width="30" height="6" rx="2.500" fill="#7a7a7a" />
    <g fill="none" stroke="#2b8a1f" strokeWidth="4.500"><path d="M20 26l3-4h3l2.500 4" /><path d="M30.500 28l2 4-2.500 4h-4" /><path d="M22 36h-4l-2-4 2-3.500" /></g>
  </Icon>
);
const GridIcon = (
  <Icon size={48}>
    {[9, 21, 33].flatMap((y) => [9, 21, 33].map((x) => (<rect key={`${x}-${y}`} x={x} y={y} width="6" height="6" rx="1.500" fill="#f0eeef" />)))}
  </Icon>
);

const Cross = ({ size = 16, reach = 4, color = ink, w = 1.5 }) => {
  const a = size / 2 - reach;
  const b = size / 2 + reach;
  return (<Icon size={size}><path d={`M${a} ${a}L${b} ${b}M${b} ${a}L${a} ${b}`} stroke={color} strokeWidth={w} /></Icon>);
};
const Chevron = () => (<Icon size={16}><path d="M3.500 6l4.500 4.500L12.500 6" stroke={ink} strokeWidth="1.300" /></Icon>);
const InfoIcon = () => (
  <Icon size={30}>
    <circle cx="15" cy="15" r="14.400" fill="#1f84d4" stroke="#3b6f96" /><path d="M1.500 17a13.700 13.700 0 0 0 27 0Z" fill="#459fe0" />
    <circle cx="15" cy="6.500" r="2" fill="#fff" /><path d="M15 11v13.500" stroke="#fff" strokeWidth="3.200" />
  </Icon>
);

/* ---------- ruler ---------- */
const Ruler = () => {
  const zero = 149.5;
  const cm = 57.8;
  const end = 1104.5;
  const numbers = [-2, -1, ...Array.from({ length: 18 }, (_, i) => i + 1)];
  const halves = [-2.5, -1.5, -0.5, ...Array.from({ length: 19 }, (_, i) => i + 0.5)];
  const tabs = Array.from({ length: 12 }, (_, i) => zero + (i + 1) * 73.4);
  return (
    <svg width="1252" height="19" fill="none" aria-label="Ruler">
      <rect x={zero} y="1" width={end - zero} height="15" fill="#fff" />
      <path d={`M${zero} 1.500H2.500V15.500H${zero}M${end} 1.500H1249.500V15.500H${end}`} stroke="#a6a6a6" />
      {halves.map((n) => (<path key={n} d={`M${Math.round(zero + n * cm) - 1}.5 6v4`} stroke="#999" />))}
      {numbers.map((n) => (
        <g key={n}>
          <path d={`M${Math.round(zero + n * cm) - 1}.5 1v1.500M${Math.round(zero + n * cm) - 1}.5 14v1.500`} stroke="#999" />
          <text x={zero + n * cm - 1} y="11" fontSize="9" fill="#999" textAnchor="middle" fontFamily="Noto Sans">{Math.abs(n)}</text>
        </g>
      ))}
      {tabs.map((x) => (<path key={x} d={`M${x - 2.5} 15.500h5M${x} 12v3.500`} stroke="#999" />))}
      <path d="M145.500 .500h8v3l-4 4.500 4 4.500v4h-8v-4l4-4.500-4-4.500Z" fill="#fff" stroke="#888" />
      <path d="M1100.500 16.500h8v-3.500l-4-4.500-4 4.500Z" fill="#fff" stroke="#888" />
    </svg>
  );
};

/* ---------- toolbar data: name, icon, kind ---------- */
const SEP = "|";
const standardTools = [
  ["New", "newdoc", "split"], ["Open", "open", "split"], ["Save", "save", "split"], SEP,
  ["Export as PDF", "pdf"], ["Print", "print"], ["Print Preview", "preview"], SEP,
  ["Cut", "cut", "off"], ["Copy", "copy", "off"], ["Paste", "paste", "splitOff"], SEP,
  ["Clone Formatting", "clone"], SEP,
  ["Undo", "undo", "splitOff"], ["Redo", "redo", "splitOff"], SEP,
  ["Find and Replace", "find"], ["Spelling", "spell"], ["Formatting Marks", "pilcrow"], SEP,
  ["Insert Table", "table", "split"], ["Insert Image", "image"], ["Insert Chart", "chart"], ["Insert Text Box", "textbox"], SEP,
  ["Page Break", "pagebreak"], ["Insert Field", "field", "split"], ["Special Character", "omega", "split"], SEP,
  ["Insert Hyperlink", "link"], ["Insert Footnote", "footnote"], ["Insert Endnote", "endnote"], ["Insert Bookmark", "bookmark"], ["Cross-reference", "crossref"], SEP,
  ["Insert Comment", "comment"], ["Track Changes", "track"], SEP,
  ["Insert Line", "hline"], ["Basic Shapes", "diamond", "split"], ["Draw Functions", "paint"],
];
const formatTools = [
  ["Bold", "bold", "on"], ["Italic", "italic"], ["Underline", "underline", "split"], ["Strikethrough", "strike"], SEP,
  ["Superscript", "sup"], ["Subscript", "sub"], SEP, ["Clear Formatting", "clear"], SEP,
  ["Font Color", "fontColor", "split"], ["Highlighting Color", "highlight", "split"], SEP,
  ["Align Left", "left", "on"], ["Align Center", "center"], ["Align Right", "right"], ["Justified", "justify"], SEP,
  ["Bullets", "bullets", "split"], ["Numbering", "numbers", "split"], ["No List", "noList", "on"], SEP,
  ["Increase Indent", "indent"], ["Decrease Indent", "outdent"], SEP,
  ["Line Spacing", "spacing", "split"], ["Increase Paragraph Spacing", "spaceUp"], ["Decrease Paragraph Spacing", "spaceDown"],
];
const Tools = ({ items }) =>
  items.map((item, i) => {
    if (item === SEP) return <ToolSeparator key={i} />;
    const [name, icon, kind = ""] = item;
    const off = kind === "off" || kind === "splitOff";
    if (kind.startsWith("split"))
      return (
        <SplitTool key={name} $off={off}>
          <SplitMain aria-label={name} disabled={off}>{icons[icon]}</SplitMain>
          <SplitArrow aria-label={`${name} options`} $off={off} disabled={off} />
        </SplitTool>
      );
    return (
      <ToolButton key={name} aria-label={name} $on={kind === "on"} disabled={off}>{icons[icon]}</ToolButton>
    );
  });

const ComboBox = ({ label, value, width, after, italic, clip }) => (
  <Combo $width={width} $after={after}>
    <ComboInput aria-label={label} defaultValue={value} $italic={italic} $clip={clip} />
    <ComboArrow aria-label={`${label} list`}><Chevron /></ComboArrow>
  </Combo>
);

const words = [
  ["all", "do", "no", "say", "want"],
  ["am", "eat", "now", "she", "was"],
  ["are", "four", "on", "so", "well"],
  ["at", "get", "our", "soon", "went"],
];
const columns = [216, 189, 215, 203, 192];
const sideTools = [["Styles", "styles"], ["Gallery", "gallery"], ["Navigator", "navigator"], ["Page", "page"], ["Style Inspector", "inspect"]];

export default function App() {
  return (
    <Desktop>
      <GlobalStyle />
      <TopBar>
        <TopGroup $gap={41}>
          <TopButton>Activities</TopButton>
          <TopButton>
            <Icon size={14}><path d="M2 0h7l3 3v11H2Z" fill="#f2f2f2" /><Lines color="#222" w={1} rows={[[4, 8, 3.500], [4, 10, 5.500], [4, 10, 7.500], [4, 10, 9.500], [4, 8, 11.500]]} /></Icon>
            LibreOffice Writer
          </TopButton>
        </TopGroup>
        <ClockGroup $gap={16}>
          <TopButton>Apr 21&nbsp; 19:14</TopButton>
          <Icon size={16}><path d="M2 12.500h12M3.500 12.500c1-2 1-3 1-5.500a3.500 3.500 0 0 1 7 0c0 2.500 0 3.500 1 5.500M6.500 14.500h3" stroke="#eee" strokeWidth="1.200" /></Icon>
        </ClockGroup>
        <TopGroup $end $gap={12}>
          <Icon size={16}><path d="M1 5.500h3L8.500 1.500v13L4 10.500H1Z" fill="#fff" /><path d="M10.500 5.500c1 1.500 1 3.500 0 5M12.500 3.500c2 2.500 2 6.500 0 9" stroke="#ddd" strokeWidth="1.200" /></Icon>
          <Icon size={16}><path d="M5 3.200a6 6 0 1 0 6 0M8 1v6.500" stroke="#eee" strokeWidth="1.400" /></Icon>
        </TopGroup>
      </TopBar>
      <Body>
        <Dock>
          {dockApps.map(([name, icon, active]) => (
            <DockButton key={name} aria-label={name}>
              <DockTile $active={active}>{icon}</DockTile>
              {active && <RunningDot />}
            </DockButton>
          ))}
          <DockRule />
          <DockButton aria-label="Trash">{TrashIcon}</DockButton>
          <Spacer />
          <DockButton aria-label="Show Applications">{GridIcon}</DockButton>
        </Dock>
        <Window>
          <TitleBar>
            <Title>Dolch_Sight_Words_Primer.docx - LibreOffice Writer</Title>
            <WindowButtons>
              <RoundButton aria-label="Minimize"><Icon size={16}><path d="M4 11.500h8" stroke={ink} strokeWidth="1.300" /></Icon></RoundButton>
              <RoundButton aria-label="Restore"><Icon size={16}><path d="M4.500 6.500h5v5.500h-5ZM6.500 4h5v6" stroke={ink} strokeWidth="1.200" /></Icon></RoundButton>
              <RoundButton aria-label="Close"><Cross /></RoundButton>
            </WindowButtons>
          </TitleBar>
          <MenuBar>
            <Menus>
              {["File", "Edit", "View", "Insert", "Format", "Styles", "Table", "Form", "Tools", "Window", "Help"].map((m) => (<button key={m}>{m}</button>))}
            </Menus>
            <CloseDoc aria-label="Close Document"><Cross size={14} /></CloseDoc>
          </MenuBar>
          <Toolbar $height={38}><Tools items={standardTools} /></Toolbar>
          <Toolbar $height={40}>
            <ComboBox label="Paragraph Style" value="Default Paragraph Style" width={202} clip />
            <ToolButton aria-label="Update Selected Style">{icons.styleUpdate}</ToolButton>
            <ToolButton aria-label="New Style">{icons.styleNew}</ToolButton>
            <ToolSeparator />
            <ComboBox label="Font Name" value="Segoe UI" width={221} after={8} italic />
            <ComboBox label="Font Size" value="24 pt" width={101} />
            <ToolSeparator />
            <Tools items={formatTools} />
          </Toolbar>
          <Work>
            <Editor>
              {[["Help us make LibreOffice even better!", "Get involved"], ["Your donations support our worldwide community.", "Donate"]].map(([text, action]) => (
                <InfoBar key={action}>
                  <InfoIcon />
                  <InfoText>{text}</InfoText>
                  <InfoAction>{action}</InfoAction>
                  <button aria-label="Close Infobar"><Cross size={18} reach={8} color="#00508f" w={2} /></button>
                </InfoBar>
              ))}
              <Scroller>
                <Canvas>
                  <RulerRow><TabMark /><Ruler /></RulerRow>
                  <PageArea>
                    <Page>
                      <Corner /><Corner $right /><Caret />
                      <Heading><Misspelt $big>Dolch</Misspelt> Sight Words – Primer</Heading>
                      <Paragraph>
                        <Misspelt>Dolch’s</Misspelt> primer word list includes 52 high frequency words. These<br />
                        words are ideal to introduce after your child can automatically<br />
                        recognize the <Misspelt>pre-primer</Misspelt> list. The <Misspelt>pre-primer</Misspelt> list contains many<br />
                        words that are frequently used in kindergarten through second<br />
                        grade as well as some of the most common English words. The<br />
                        primer word list also contains high frequency words, some more<br />
                        prevalent than others. <Misspelt>Dolch’s</Misspelt> included the following sight words on<br />
                        his primer word list.
                      </Paragraph>
                      <WordTable>
                        <colgroup>{columns.map((w, i) => (<col key={i} style={{ width: w }} />))}</colgroup>
                        <tbody>
                          {words.map((row) => (<tr key={row[0]}>{row.map((w) => (<WordCell key={w}>{w}</WordCell>))}</tr>))}
                        </tbody>
                      </WordTable>
                      <Pointer width="12" height="26" viewBox="0 0 12 26" fill="none" aria-hidden="true">
                        <path d="M2 3h3l1 1 1-1h3M2 23h3l1-1 1 1h3M6 4v18" stroke="#999" strokeWidth="4" /><path d="M2 3h3l1 1 1-1h3M2 23h3l1-1 1 1h3M6 4v18" stroke="#fff" strokeWidth="3" /><path d="M2 3h3l1 1 1-1h3M2 23h3l1-1 1 1h3M6 4v18" stroke="#333" strokeWidth="1.300" />
                      </Pointer>
                    </Page>
                  </PageArea>
                </Canvas>
                <ScrollTrack><ScrollThumb /></ScrollTrack>
              </Scroller>
            </Editor>
            <SideBar>
              <SideButton $first aria-label="Sidebar Settings">{icons.burger}</SideButton>
              <SideButton $on aria-label="Properties">{icons.properties}</SideButton>
              {sideTools.map(([name, icon]) => (<SideButton key={name} aria-label={name}>{icons[icon]}</SideButton>))}
              <SideHandle aria-label="Hide Sidebar" />
            </SideBar>
          </Work>
          <StatusBar>
            <StatusCell $first $center><Icon size={12}><path d="M4.500 1.500h3v3.500H10L6 9 2 5h2.500ZM1.500 8v2.500h9V8" fill="#a3d040" stroke="#47603a" strokeWidth="1.200" /></Icon></StatusCell>
            <StatusCell>Page 1 of 1</StatusCell>
            <StatusCell>130 words, 677 characters</StatusCell>
            <StatusCell>Default Page Style</StatusCell>
            <StatusCell $center>English (USA)</StatusCell>
            <StatusCell />
            <StatusCell $center><Icon size={18}><rect x="1.500" y="5.500" width="7" height="7" stroke={orange} strokeWidth="1.400" /><path d="M12 4.500h5M12 13.500h5M14.500 4.500v9" stroke="#222" strokeWidth="1.300" /></Icon></StatusCell>
            <StatusCell />
            <StatusCell $center>Outline 2</StatusCell>
            <StatusCell $center>
              <svg width="56" height="14" viewBox="0 0 56 14" fill="none" aria-label="View layout">
                <path d="M1.500 2.500h4l3 3v6h-7Z" stroke="#444" strokeWidth="1.400" />
                <path d="M15.500 2.500h3l3 3v6h-6ZM25.500 2.500h3l3 3v6h-6ZM39.500 11.500v-6l3-3h4v9ZM47.500 2.500h4l3 3v6h-7Z" stroke="#b3b3b3" strokeWidth="1.300" />
              </svg>
            </StatusCell>
            <StatusCell $gap={5}>
              <ZoomStep aria-label="Zoom Out"><Icon size={10}><path d="M1 5h8" stroke="#555" strokeWidth="2" /></Icon></ZoomStep>
              <ZoomSlider type="range" aria-label="Zoom" min="0" max="100" defaultValue="55" />
              <ZoomStep aria-label="Zoom In"><Icon size={10}><path d="M1 5h8M5 1v8" stroke="#555" strokeWidth="2" /></Icon></ZoomStep>
            </StatusCell>
            <StatusCell $end>153%</StatusCell>
          </StatusBar>
        </Window>
      </Body>
    </Desktop>
  );
}
